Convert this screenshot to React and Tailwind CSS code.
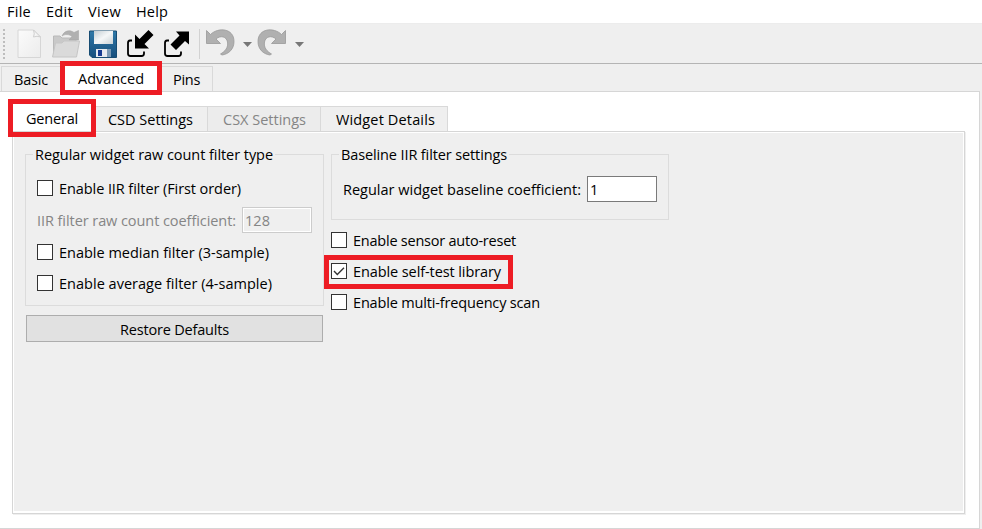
import { useLayoutEffect, useRef } from "react";

// A single line of text whose letter spacing is adjusted to fill a given width.
function Label({ w, className = "", children }) {
  const ref = useRef(null);
  useLayoutEffect(() => {
    const el = ref.current;
    el.style.letterSpacing = "0px";
    const natural = el.getBoundingClientRect().width;
    el.style.letterSpacing = `${(w - natural) / children.length}px`;
  }, [w, children]);
  return (
    <span className={`block shrink-0 whitespace-pre leading-5 ${className}`}>
      <span ref={ref} className="inline-block">{children}</span>
    </span>
  );
}

function Check({ w, checked, children }) {
  return (
    <label className="flex h-4 items-center gap-[6px]">
      <span className="flex size-4 shrink-0 items-center justify-center border border-[#333] bg-white">
        {checked && (
          <svg width="14" height="14" viewBox="0 0 14 14" fill="none" stroke="#333" strokeWidth="1.4">
            <path d="M2 7l3.3 3.4L12 3.7" />
          </svg>
        )}
      </span>
      <Label w={w} className="pt-[2px]">{children}</Label>
    </label>
  );
}

function Group({ title, w, className, children }) {
  return (
    <section className={`border border-[#dcdcdc] ${className}`}>
      <div className="-mt-[10px] ml-[7px] flex h-5">
        <div className="bg-[#efefef] px-[2px]"><Label w={w}>{title}</Label></div>
      </div>
      {children}
    </section>
  );
}

function Arrow({ out }) {
  return (
    <svg width="28" height="28" viewBox="0 0 28 28" className="shrink-0">
      <path d="M6 10.500H4Q2 10.500 2 13V23.500Q2 26 4.500 26H15.500Q18 26 18 23.500V21.500" fill="none" stroke="#000" strokeWidth="1.800" />
      {out ? (
        <path d="M13 1.500H26V14.500L22 11L13 20L7.500 14.500L16.500 5.500Z" />
      ) : (
        <path d="M22.500 0L27.500 5L18.500 14L23 18.500H9V4.500L13.500 9Z" />
      )}
    </svg>
  );
}

function Undo({ flip }) {
  return (
    <svg width="30" height="28" viewBox="0 0 30 28" className={flip ? "-scale-x-100" : ""}>
      <path d="M1.500 2.500L5.500 6.500C13 -1 29 0 29 13.500C29 21 24 26 17 27L15.500 26C20 23.500 23.500 19.500 22.500 14C21.500 8.500 15.500 7 11 11L15.500 15.500H1.500Z" fill="#b0b0b0" stroke="#999" strokeWidth=".8" />
    </svg>
  );
}

function Caret() {
  return <svg width="9" height="5" viewBox="0 0 9 5"><path d="M0 0H9L4.500 5Z" fill="#777" /></svg>;
}

function Toolbar() {
  return (
    <div className="flex h-10 items-center border-b border-[#b4b4b4] bg-[#efefef]">
      <svg width="16" height="32" viewBox="0 0 16 32" className="shrink-0">
        <path d="M4 1V32" stroke="#bdbdbd" strokeWidth="2" strokeDasharray="2 2" />
      </svg>
      <svg width="26" height="30" viewBox="0 0 26 30" className="shrink-0">
        <defs>
          <linearGradient id="paper" x2="1" y2="1"><stop stopColor="#fbfbfb" /><stop offset="1" stopColor="#ececec" /></linearGradient>
        </defs>
        <path d="M2 1H17.500L24.500 8V28.500H2Z" fill="url(#paper)" stroke="#d6d6d6" />
        <path d="M17.500 1Q19 5 17.500 8Q21 6.500 24.500 8Z" fill="#f5f5f5" stroke="#cfcfcf" />
      </svg>
      <svg width="30" height="30" viewBox="0 0 30 30" className="ml-[9px] shrink-0">
        <path d="M2.500 26V7H9L11 9H25V26Z" fill="#c9c9c9" stroke="#b9b9b9" />
        <path d="M11 7C13 1.500 19 .5 23 3.500L27.500 1.500V11H18L21 7.500C18 5 14 5 11 7Z" fill="#b0b0b0" stroke="#a6a6a6" strokeWidth=".6" />
        <path d="M4.500 14H11L13 12H28.500L25.500 28H1.500Z" fill="#dadada" stroke="#c6c6c6" />
      </svg>
      <svg width="28" height="28" viewBox="0 0 28 28" className="ml-[8px] shrink-0">
        <defs>
          <linearGradient id="disk" x2="0" y2="1"><stop stopColor="#2f79a8" /><stop offset="1" stopColor="#174f7d" /></linearGradient>
          <linearGradient id="plate" x2="1" y2="1"><stop stopColor="#c3cdd2" /><stop offset=".5" stopColor="#f5f7f8" /><stop offset="1" stopColor="#c9d2d6" /></linearGradient>
        </defs>
        <path d="M.5 1H27.500V27.500H3L.5 25Z" fill="url(#disk)" stroke="#174c73" />
        <path d="M5 1H24V14H5Z" fill="url(#plate)" />
        <path d="M7 19H18V27H7Z" fill="#e6eaef" />
        <path d="M9 20H13V26H9Z" fill="#183c91" />
        <path d="M18 19H22V27H18Z" fill="#7c9bb5" />
      </svg>
      <div className="ml-[9px] flex gap-[9px]"><Arrow /><Arrow out /></div>
      <div className="ml-[8px] h-[30px] w-px bg-[#d2d2d2]" />
      <div className="ml-[5px] flex items-center">
        <div className="-mt-[3px]"><Undo /></div>
        <div className="ml-[8px] pt-px"><Caret /></div>
        <div className="-mt-[3px] ml-[5px]"><Undo flip /></div>
        <div className="ml-[8px] pt-px"><Caret /></div>
      </div>
    </div>
  );
}

export default function App() {
  return (
    <div className="relative flex h-[529px] w-[982px] flex-col overflow-hidden bg-[#efefef] font-['Open_Sans',sans-serif] text-[14.500px] text-black">
      <nav className="flex h-6 shrink-0 border-b border-[#ececec] bg-white pl-[7px] pt-[2px]">
        <div className="w-[39px]"><Label w={24}>File</Label></div>
        <div className="w-[42px]"><Label w={27}>Edit</Label></div>
        <div className="w-[48px]"><Label w={33}>View</Label></div>
        <Label w={32}>Help</Label>
      </nav>
      <Toolbar />
      <div className="flex h-[27px] shrink-0 items-end">
        <div className="ml-px h-[25px] w-[60px] border-l border-t border-[#d9d9d9] pl-3 pt-[3px]"><Label w={34}>Basic</Label></div>
        <div className="h-[27px] w-[99px] bg-white pl-[17px] pt-[5px]"><Label w={66}>Advanced</Label></div>
        <div className="h-[25px] w-[53px] border-r border-t border-[#d9d9d9] pl-[13px] pt-[3px]"><Label w={27}>Pins</Label></div>
      </div>
      <div className="mr-[2px] flex grow flex-col border-y border-r border-[#d6d6d6] bg-white pl-3 pt-[14px]">
        <div className="flex h-[25px] shrink-0">
          <div className="w-[84px] pl-[14px] pt-[3px]"><Label w={52}>General</Label></div>
          <div className="w-[111px] border-t border-[#d9d9d9] bg-[#efefef] pl-[12px] pt-[3px]"><Label w={85}>CSD Settings</Label></div>
          <div className="w-[113px] border-l border-t border-[#d9d9d9] bg-[#ececec] pl-[15px] pt-[3px] text-[#858585]"><Label w={83}>CSX Settings</Label></div>
          <div className="w-[128px] border-x border-t border-[#d9d9d9] bg-[#efefef] pl-[15px] pt-[3px]"><Label w={99}>Widget Details</Label></div>
        </div>
        <div className="h-[383px] w-[953px] border border-[#d6d6d6] bg-white p-px shadow-[1px_1px_0_#efefef]">
          <div className="flex h-[378px] gap-[7px] bg-[#efefef] pl-[11px] pt-[21px]">
            <div className="w-[299px]">
              <Group title="Regular widget raw count filter type" w={238} className="h-[152px] w-[299px]">
                <div className="flex flex-col pl-[11px] pt-[15px]">
                  <Check w={182}>Enable IIR filter (First order)</Check>
                  <div className="my-[11px] flex h-[26px] items-center gap-[6px] text-[#858585]">
                    <Label w={199} className="pt-[2px]">IIR filter raw count coefficient:</Label>
                    <div className="flex h-[26px] w-[70px] items-center border border-[#ccc] bg-[#efefef] pl-[2px] pt-px shadow-[inset_0_0_0_1px_white]"><Label w={25}>128</Label></div>
                  </div>
                  <div className="flex flex-col gap-[15px]">
                    <Check w={210}>Enable median filter (3-sample)</Check>
                    <Check w={213}>Enable average filter (4-sample)</Check>
                  </div>
                </div>
              </Group>
              <button className="ml-px mt-[9px] flex h-[27px] w-[297px] items-center justify-center border border-[#adadad] bg-[#e1e1e1] pt-[2px]"><Label w={109}>Restore Defaults</Label></button>
            </div>
            <div>
              <Group title="Baseline IIR filter settings" w={166} className="h-[66px] w-[338px]">
                <div className="flex items-center gap-[6px] pl-[11px] pt-[11px]">
                  <Label w={238} className="pt-[2px]">Regular widget baseline coefficient:</Label>
                  <div className="flex h-[26px] w-[70px] items-center border border-[#7a7a7a] bg-white pl-[2px] pt-px"><Label w={8}>1</Label></div>
                </div>
              </Group>
              <div className="mt-3 flex flex-col gap-[15px]">
                <Check w={163}>Enable sensor auto-reset</Check>
                <Check w={148} checked>Enable self-test library</Check>
                <Check w={187}>Enable multi-frequency scan</Check>
              </div>
            </div>
          </div>
        </div>
      </div>
      <div className="absolute left-[60px] top-[61px] h-[34px] w-[102px] border-[5px] border-[#ed1c24]" />
      <div className="absolute left-[8px] top-[99px] h-[38px] w-[88px] border-[5px] border-[#ed1c24]" />
      <div className="absolute left-[324px] top-[255px] h-[34px] w-[189px] border-[5px] border-[#ed1c24]" />
    </div>
  );
}
